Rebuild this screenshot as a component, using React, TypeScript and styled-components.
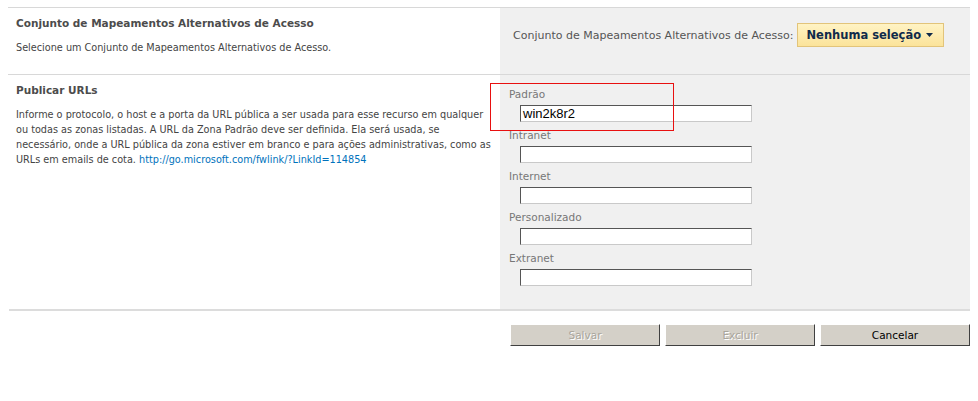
import React from 'react';
import styled, { createGlobalStyle } from 'styled-components';

const Global = createGlobalStyle`
	body { margin: 0; background: #fff; font-family: Verdana, "DejaVu Sans", sans-serif; }
`;

const Page = styled.div`
	position: relative;
	width: 978px;
	padding: 7px 8px 0 8px;
	box-sizing: border-box;
`;

const Section = styled.div<{ h: number }>`
	display: grid;
	grid-template-columns: 492px 470px;
	height: ${(p) => p.h}px;
	border-top: 1px solid #d8d8d8;
`;

const Left = styled.div`
	padding: 9px 8px;
	color: #333;
`;

const Right = styled.div`
	background: #f0f0f0;
`;

const Title = styled.div`
	font-weight: bold;
	font-size: 10.5px;
	color: #4c4c4c;
	margin-bottom: 11px;
	white-space: nowrap;
`;

const Desc = styled.div`
	font-size: 9.7px;
	line-height: 15px;
	color: #444;
	white-space: nowrap;
`;

const Link = styled.a`
	color: #0072bc;
	text-decoration: none;
`;

const Picker = styled.div`
	display: flex;
	align-items: center;
	gap: 4px;
	padding: 15px 0 0 13px;
	font-size: 11px;
	color: #555;
	white-space: nowrap;
`;

const DropButton = styled.div`
	display: flex;
	align-items: center;
	gap: 5px;
	height: 22px;
	padding: 0 10px 0 8px;
	background: linear-gradient(#fff3c4, #fbe39a);
	border: 1px solid #e2c47a;
	font-weight: bold;
	font-size: 11.5px;
	color: #0f2a4a;
	white-space: nowrap;
`;

const Zones = styled.div`
	padding: 14px 0 0 9px;
`;

const Field = styled.div`
	height: 41px;
`;

const Label = styled.div`
	font-size: 10.5px;
	color: #777;
	height: 11px;
	line-height: 11px;
`;

const Input = styled.div`
	margin: 5px 0 0 11px;
	width: 228px;
	height: 15px;
	border: 1px solid #c9c9c9;
	border-top-color: #555;
	border-left-color: #555;
	background: #fff;
	font-family: "Liberation Sans", Arial, sans-serif;
	font-size: 13px;
	line-height: 15px;
	padding-left: 2px;
	color: #000;
`;

const Bottom = styled.div`
	margin: 0 8px 0 9px;
	border-top: 2px solid #dcdcdc;
	display: flex;
	justify-content: flex-end;
	gap: 5px;
	padding-top: 13px;
`;

const Button = styled.div<{ disabled?: boolean }>`
	width: 148px;
	height: 20px;
	background: #d4d0c8;
	border: 1px solid;
	border-color: #fff #404040 #404040 #fff;
	display: flex;
	align-items: center;
	justify-content: center;
	font-family: Tahoma, "DejaVu Sans", sans-serif;
	font-size: 10.5px;
	color: ${(p) => (p.disabled ? '#a9a59c' : '#000')};
	text-shadow: ${(p) => (p.disabled ? '1px 1px 0 #fff' : 'none')};
`;

const Highlight = styled.div`
	position: absolute;
	left: 490px;
	top: 83px;
	width: 182px;
	height: 46px;
	border: 1px solid #e81010;
	pointer-events: none;
`;

const zones = ['Padrão', 'Intranet', 'Internet', 'Personalizado', 'Extranet'];

export default function App() {
	return (
		<>
			<Global />
			<Page>
				<Section h={66}>
					<Left>
						<Title>Conjunto de Mapeamentos Alternativos de Acesso</Title>
						<Desc>Selecione um Conjunto de Mapeamentos Alternativos de Acesso.</Desc>
					</Left>
					<Right>
						<Picker>
							Conjunto de Mapeamentos Alternativos de Acesso:
							<DropButton>
								Nenhuma seleção
								<svg width="7" height="4" viewBox="0 0 7 4">
									<path d="M0 0h7L3.5 4z" fill="#0f2a4a" />
								</svg>
							</DropButton>
						</Picker>
					</Right>
				</Section>
				<Section h={234}>
					<Left>
						<Title>Publicar URLs</Title>
						<Desc>
							Informe o protocolo, o host e a porta da URL pública a ser usada para esse recurso em qualquer
							<br />
							ou todas as zonas listadas. A URL da Zona Padrão deve ser definida. Ela será usada, se
							<br />
							necessário, onde a URL pública da zona estiver em branco e para ações administrativas, como as
							<br />
							URLs em emails de cota. <Link>http://go.microsoft.com/fwlink/?LinkId=114854</Link>
						</Desc>
					</Left>
					<Right>
						<Zones>
							{zones.map((z, i) => (
								<Field key={z}>
									<Label>{z}</Label>
									<Input>{i === 0 ? 'win2k8r2' : ''}</Input>
								</Field>
							))}
						</Zones>
					</Right>
				</Section>
				<Highlight />
			</Page>
			<Bottom>
				<Button disabled>Salvar</Button>
				<Button disabled>Excluir</Button>
				<Button>Cancelar</Button>
			</Bottom>
		</>
	);
}
